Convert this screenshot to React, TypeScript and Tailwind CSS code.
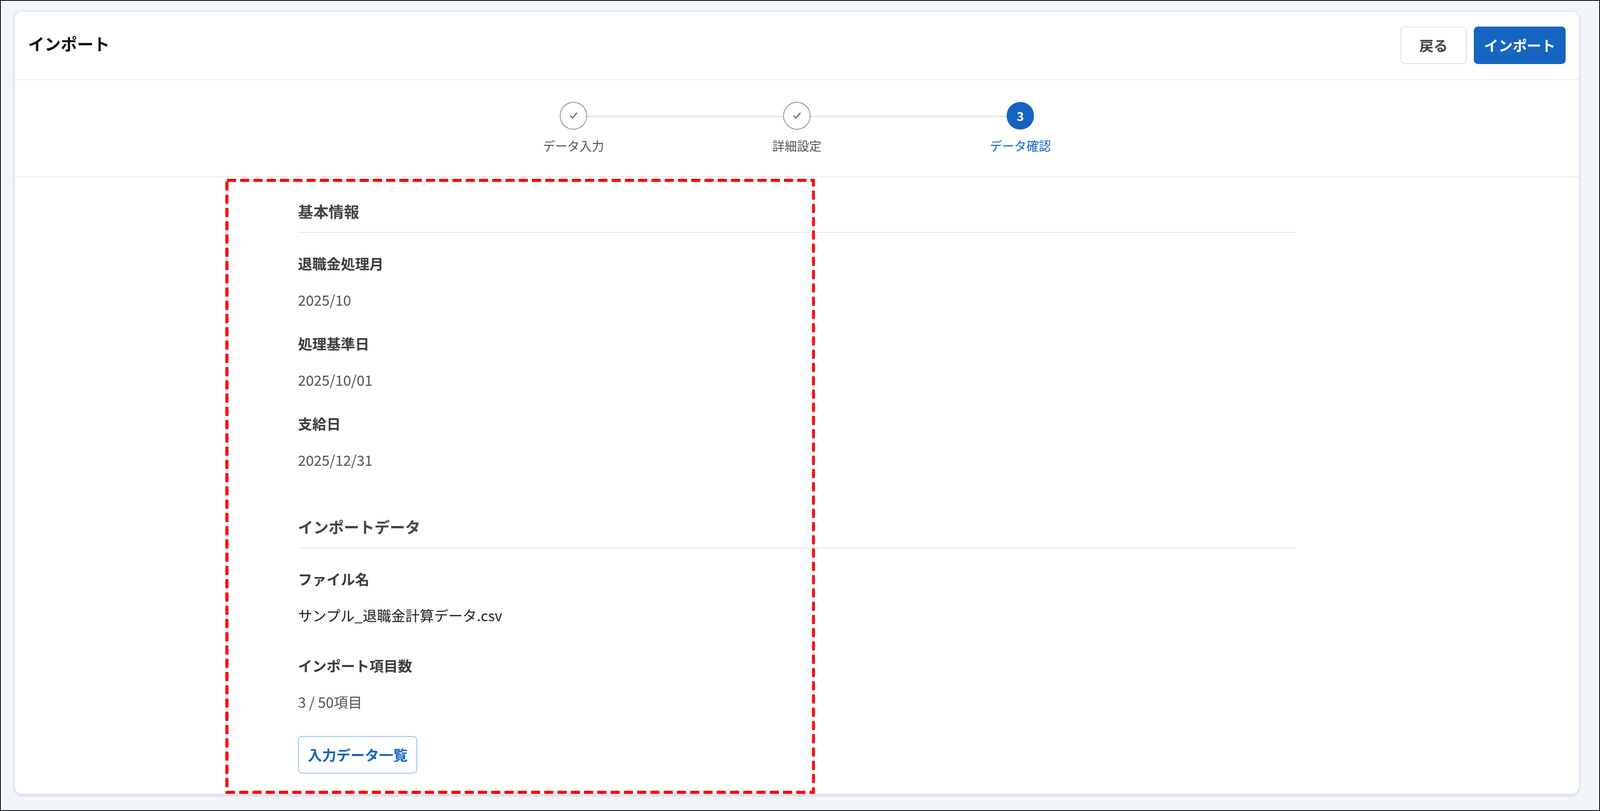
import React from 'react';

// The window is 4096 css px wide; zoom maps the 1568-unit design onto it.
// Vertical spacings are stretched a little so the page also fills the 2077px height.

const steps = [
  { label: 'データ入力', state: 'done' },
  { label: '詳細設定', state: 'done' },
  { label: 'データ確認', state: 'current', num: 3 },
];

const CheckMark: React.FC = () => (
  <svg width="10" height="10" viewBox="0 0 10 10" fill="none">
    <path d="M2 5.2 L4.1 7.3 L8.2 2.6" stroke="#666" strokeWidth="1.1" strokeLinecap="round" strokeLinejoin="round" />
  </svg>
);

const Stepper: React.FC = () => (
  <div className="flex justify-center pt-[21.7px] pb-[21.3px] border-b border-[#e6e8eb]">
    {steps.map((s, i) => (
      <React.Fragment key={s.label}>
        {i > 0 && <div className="w-[192px] h-px bg-[#cfd2d6] mt-[13.5px]" />}
        <div className="w-[27px] flex flex-col items-center">
          {s.state === 'done' ? (
            <div className="w-[27px] h-[27px] rounded-full border border-[#8a8d91] bg-white flex items-center justify-center">
              <CheckMark />
            </div>
          ) : (
            <div className="w-[27px] h-[27px] rounded-full bg-[#1565c0] flex items-center justify-center text-white text-[12px] font-bold">
              {s.num}
            </div>
          )}
          <span
            className={`mt-[6.5px] whitespace-nowrap text-[12px] leading-[18px] ${
              s.state === 'current' ? 'text-[#1565c0]' : 'text-[#555]'
            }`}
          >
            {s.label}
          </span>
        </div>
      </React.Fragment>
    ))}
  </div>
);

const Field: React.FC<{ label: string; value: string; className?: string; valueClass?: string }> = ({
  label,
  value,
  className = '',
  valueClass = 'text-[#555]',
}) => (
  <div className={className}>
    <p className="text-[14px] leading-[20px] font-bold text-[#3d3d3d]">{label}</p>
    <p className={`mt-[15.5px] text-[14px] leading-[20px] ${valueClass}`}>{value}</p>
  </div>
);

const SectionTitle: React.FC<{ children: React.ReactNode; className?: string }> = ({ children, className = '' }) => (
  <h2 className={`pb-[9.5px] border-b border-[#e2e4e7] text-[15px] leading-[22px] font-bold text-[#444] ${className}`}>
    {children}
  </h2>
);

export default function App() {
  return (
    <div className="[zoom:2.612]">
      <div
        className="relative w-[1568px] h-[795px] border border-black bg-[#f1f6fd] pt-[9.8px] pl-[13px] pr-[19px] overflow-hidden"
        style={{ fontFamily: '"Noto Sans CJK JP", "Noto Sans", sans-serif' }}
      >
        <div className="h-[768.4px] bg-white rounded-lg border border-[#e2e5e9] shadow-[0_1px_3px_rgba(0,0,0,0.12)] overflow-hidden">
          {/* header */}
          <div className="h-[67px] flex items-center justify-between px-[13px] border-b border-[#e6e8eb]">
            <h1 className="mb-[4px] text-[16px] font-bold text-[#111]">インポート</h1>
            <div className="flex gap-[7px]">
              <button className="w-[65px] h-[36.6px] rounded-[4px] border border-[#dcdfe3] bg-white text-[14px] font-bold text-[#444]">
                戻る
              </button>
              <button className="w-[90px] h-[36.6px] rounded-[4px] bg-[#1565c0] text-[14px] font-bold text-white">
                インポート
              </button>
            </div>
          </div>

          <Stepper />

          {/* content */}
          <div className="w-[978px] mx-auto pt-[22.4px]">
            <SectionTitle>基本情報</SectionTitle>
            <Field label="退職金処理月" value="2025/10" className="mt-[20.2px]" />
            <Field label="処理基準日" value="2025/10/01" className="mt-[23px]" />
            <Field label="支給日" value="2025/12/31" className="mt-[23px]" />

            <SectionTitle className="mt-[44.6px]">インポートデータ</SectionTitle>
            <Field
              label="ファイル名"
              value="サンプル_退職金計算データ.csv"
              className="mt-[20.2px]"
              valueClass="text-[#222]"
            />
            <Field label="インポート項目数" value="3 / 50項目" className="mt-[29.5px]" />
            <button className="mt-[23.4px] w-[117px] h-[36.6px] rounded-[4px] border border-[#8fc0f5] bg-white text-[14px] font-bold text-[#1565c0]">
              入力データ一覧
            </button>
          </div>
        </div>

        {/* highlight annotation */}
        <svg
          className="absolute left-[220px] top-[174.5px] pointer-events-none"
          width="578"
          height="603"
          viewBox="0 0 578 603"
        >
          <rect x="1.5" y="1.5" width="575" height="600" fill="none" stroke="#ff0000" strokeWidth="3" strokeDasharray="9 4" />
        </svg>
      </div>
    </div>
  );
}
